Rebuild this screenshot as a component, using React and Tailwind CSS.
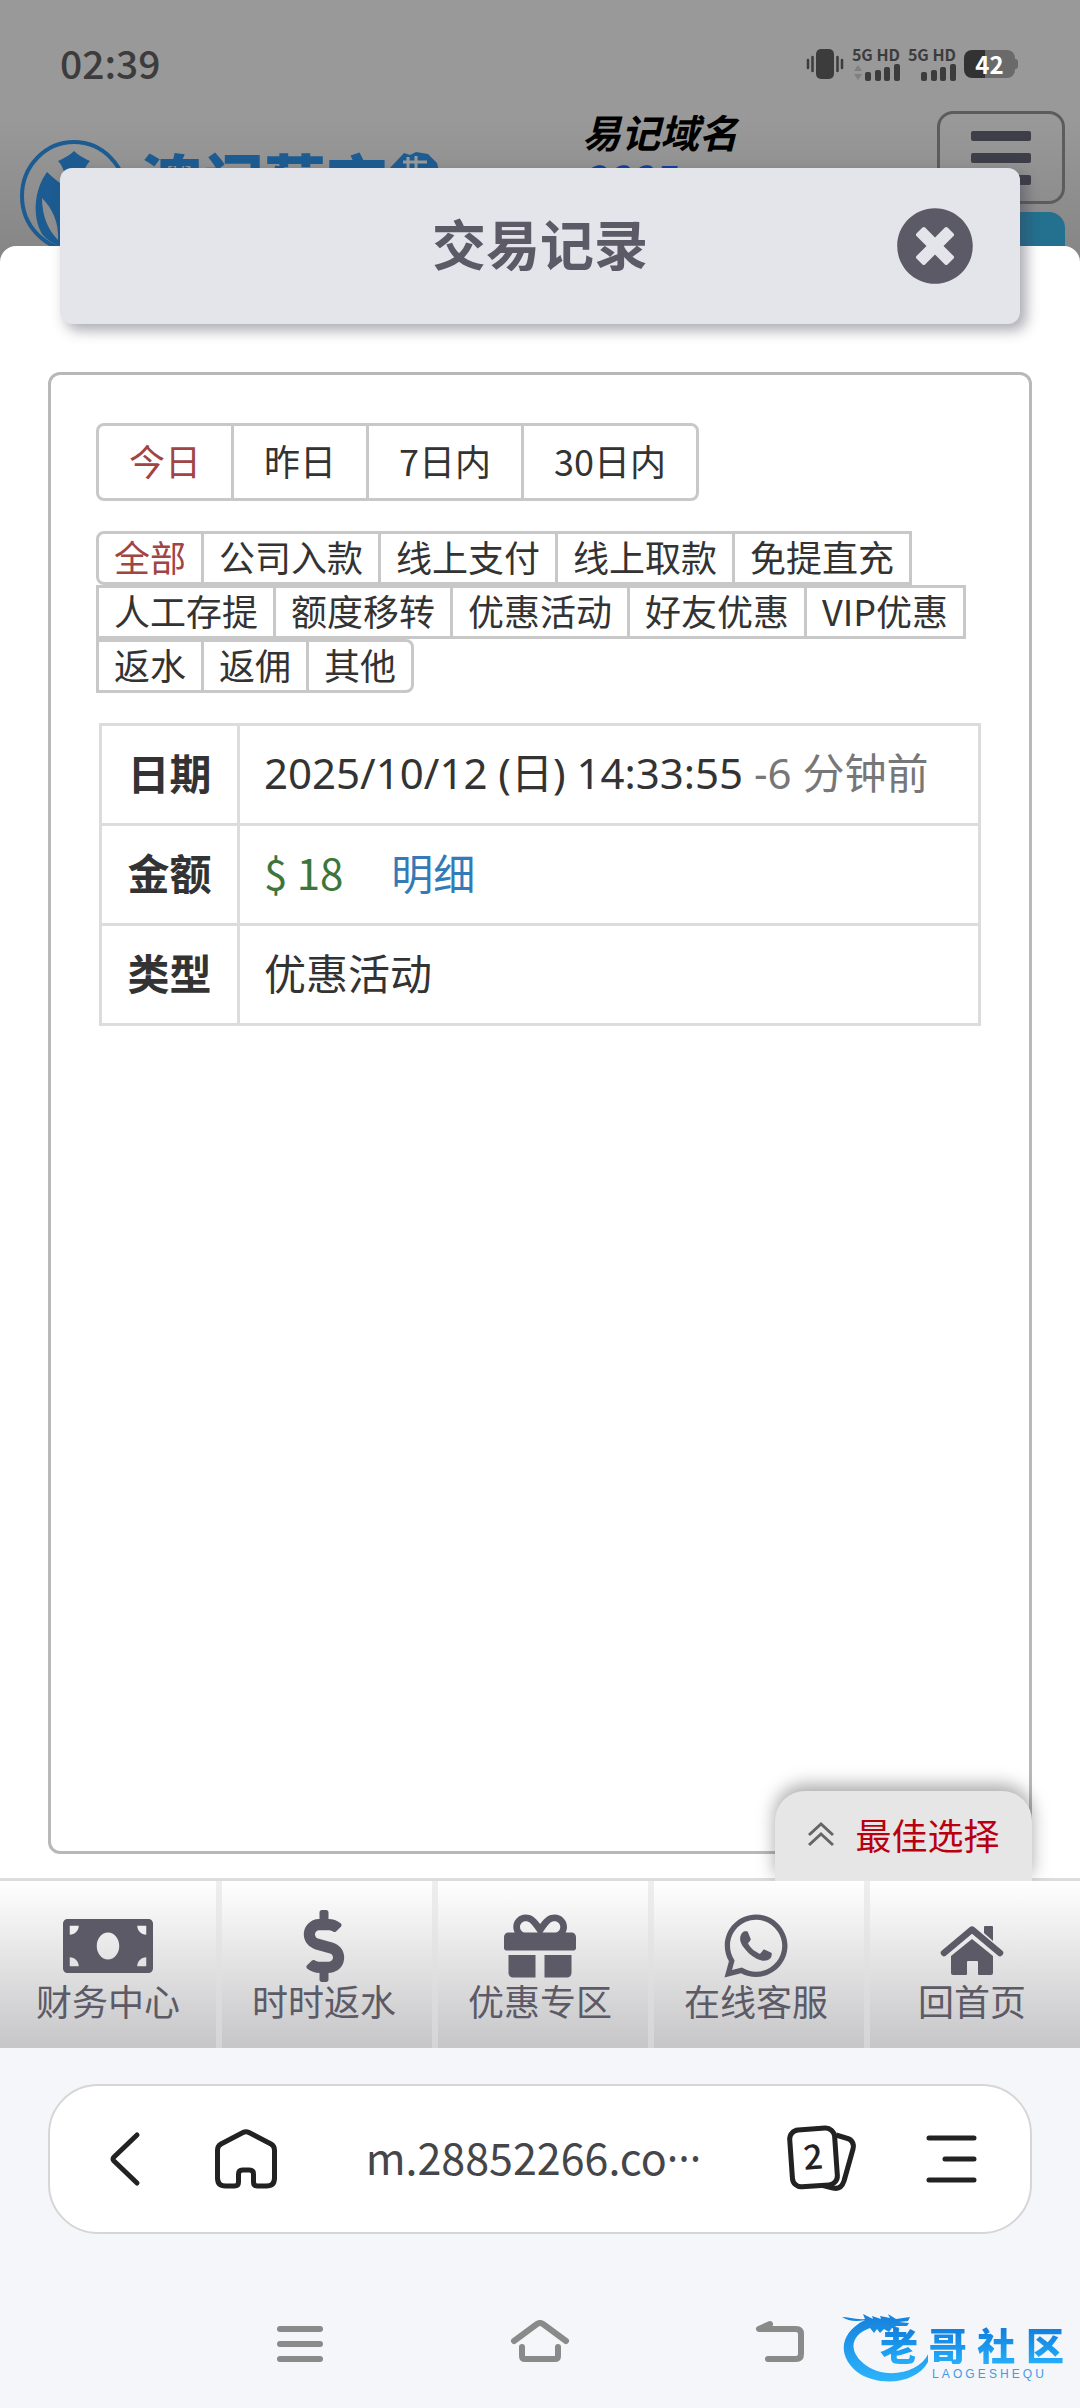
import React, { useState } from 'react';
import { FaMoneyBill, FaDollarSign, FaGift, FaWhatsapp, FaTimesCircle } from 'react-icons/fa';

const days = ['今日', '昨日', '7日内', '30日内'];

const types = [
    '全部',
    '公司入款',
    '线上支付',
    '线上取款',
    '免提直充',
    '人工存提',
    '额度移转',
    '优惠活动',
    '好友优惠',
    'VIP优惠',
    '返水',
    '返佣',
    '其他',
];

const menus = [
    { name: '财务中心', icon: FaMoneyBill, size: 'w-[90px] h-[72px]' },
    { name: '时时返水', icon: FaDollarSign, size: 'w-[72px] h-[72px]' },
    { name: '优惠专区', icon: FaGift, size: 'w-[72px] h-[72px]' },
    { name: '在线客服', icon: FaWhatsapp, size: 'w-[72px] h-[72px]' },
    { name: '回首页', icon: HouseIcon, size: 'w-[72px] h-[72px]' },
];

function HouseIcon({ className }) {
    return (
        <svg className={className} viewBox="0 0 72 72" fill="currentColor" aria-hidden="true">
            <path d="M49 16h7a1 1 0 0 1 1 1v14l-9-8v-6a1 1 0 0 1 1-1z" />
            <path d="M8 43 36 19.500 64 43" fill="none" stroke="currentColor" strokeWidth="6.500" strokeLinecap="round" strokeLinejoin="round" />
            <path d="M36 29 57 46v17a2 2 0 0 1-2 2H43a1 1 0 0 1-1-1V52a1 1 0 0 0-1-1h-9a1 1 0 0 0-1 1v12a1 1 0 0 1-1 1H17a2 2 0 0 1-2-2V46z" />
        </svg>
    );
}

function Signal({ arrows }) {
    return (
        <div className="flex w-12 flex-col items-end">
            <span className="text-base leading-4 font-bold whitespace-nowrap">5G HD</span>
            <svg width="48" height="20" viewBox="0 0 48 20" aria-hidden="true">
                {arrows && <path d="M6 3l4 6H2zM6 18l4-6H2z" fill="#808080" />}
                <rect x="13" y="10" width="6" height="9" rx="2" fill="#3c3c3c" />
                <rect x="23" y="8" width="6" height="11" rx="2" fill="#3c3c3c" />
                <rect x="32" y="5" width="6" height="14" rx="2" fill="#3c3c3c" />
                <rect x="42" y="2" width="6" height="17" rx="2" fill="#3c3c3c" />
            </svg>
        </div>
    );
}

function StatusBar() {
    return (
        <div className="flex h-24 items-center justify-between pt-8 pr-[62px] pl-[60px] text-[#3c3c3c]">
            <span className="pb-1 text-[39px] leading-10 font-medium">02:39</span>
            <div className="flex items-center gap-2">
                <svg width="38" height="32" viewBox="0 0 38 32" aria-hidden="true">
                    <rect x="10" y="1" width="18" height="30" rx="5" fill="#3c3c3c" />
                    <path d="M2 12v8M6.500 9v14M31.500 9v14M36 12v8" stroke="#3c3c3c" strokeWidth="2.500" strokeLinecap="round" />
                </svg>
                <Signal arrows />
                <Signal />
                <div className="flex items-center">
                    <div className="flex h-7 w-[51px] items-center justify-center rounded-lg bg-linear-to-r from-[#323232] from-42% to-[#6a6a6a] to-42% text-2xl leading-7 font-bold text-white">
                        42
                    </div>
                    <div className="h-2.5 w-[3px] rounded-r bg-[#6a6a6a]"></div>
                </div>
            </div>
        </div>
    );
}

function SiteHeader() {
    return (
        <div className="flex items-start justify-between pr-[15px] pl-5">
            <div className="flex items-start pt-11">
                <svg width="108" height="112" viewBox="0 0 108 112" className="shrink-0" aria-hidden="true">
                    <ellipse cx="54" cy="56" rx="52" ry="54" fill="none" stroke="#1c5c92" strokeWidth="4" />
                    <path d="M54 11c5 5 10 7 16 10-4 4-6 9-7 16H45c-1-7-3-12-7-16 6-3 11-5 16-10z" fill="#1c5c92" />
                    <path d="M27 32C14 50 12 76 22 94c8 10 20 14 32 14s24-4 32-14c10-18 8-44-5-62-10 12-22 16-27 26-5-10-17-16-27-26z" fill="#1c5c92" />
                    <path d="M22 58c10 10 17 24 16 42-10-10-16-24-16-42z" fill="#8f8f8f" />
                </svg>
                <div className="flex items-start pt-2 pl-3 text-[#1c5c92]">
                    <span className="text-[62px] leading-[64px] font-black">澳门葡京</span>
                    <svg width="52" height="56" viewBox="0 0 52 56" aria-hidden="true">
                        <path d="M16 5l6 2 6-3 12 2 9 9 2 8v20L38 56H14L2 43V20z" fill="#1c5c92" />
                        <path d="M20 9v12M15 14h24M28 8v18M12 22h28" stroke="#9a9a9a" strokeWidth="3" />
                    </svg>
                </div>
            </div>
            <div className="ml-auto flex w-[355px] flex-col pt-3 text-[39px] leading-[46px] font-bold text-black italic">
                <span>易记域名</span>
                <span className="text-[#0f3f9c]">2885</span>
            </div>
            <div className="flex flex-col items-end gap-2 pt-[15px]">
                <button
                    type="button"
                    aria-label="菜单"
                    className="flex h-[93px] w-32 flex-col items-center justify-center gap-3 rounded-2xl border-3 border-[#5c5c5c]"
                >
                    <span className="h-2.5 w-[60px] rounded-xs bg-[#3e3e48]"></span>
                    <span className="h-2.5 w-[60px] rounded-xs bg-[#3e3e48]"></span>
                    <span className="h-2.5 w-[60px] rounded-xs bg-[#3e3e48]"></span>
                </button>
                <div className="h-14 w-32 rounded-2xl bg-[#23708f]"></div>
            </div>
        </div>
    );
}

function RecordTable() {
    return (
        <table className="mx-[3px] mt-[30px] w-[882px] max-w-full border-collapse text-left text-[42px] leading-[48px] text-[#333]">
            <tbody>
                <tr className="h-[100px]">
                    <th className="w-[138px] border-3 border-[#dcdcdc] pb-1.5 text-center font-bold">日期</th>
                    <td className="border-3 border-[#dcdcdc] px-6 pb-1 font-['Noto_Sans','Noto_Sans_CJK_SC',sans-serif] whitespace-nowrap">
                        2025/10/12 (日) 14:33:55 <span className="text-[#777]">-6 分钟前</span>
                    </td>
                </tr>
                <tr className="h-[100px]">
                    <th className="border-3 border-[#dcdcdc] pb-1.5 text-center font-bold">金额</th>
                    <td className="border-3 border-[#dcdcdc] px-6 pb-1.5">
                        <span className="text-[#3c763d]">$ 18</span>
                        <a href="#detail" className="ml-12 text-[#337ab7]">
                            明细
                        </a>
                    </td>
                </tr>
                <tr className="h-[100px]">
                    <th className="border-3 border-[#dcdcdc] pb-1.5 text-center font-bold">类型</th>
                    <td className="border-3 border-[#dcdcdc] px-6 pb-1.5">优惠活动</td>
                </tr>
            </tbody>
        </table>
    );
}

function BottomMenu() {
    return (
        <nav className="relative border-t-3 border-[#dcdcdc]">
            <button
                type="button"
                className="absolute right-12 bottom-full flex h-[90px] w-[257px] items-center justify-center gap-5 rounded-t-[30px] bg-[#e6e6e6] pb-1 text-4xl text-[#b80010] shadow-[0_-6px_18px_rgba(0,0,0,0.35)]"
            >
                <svg width="28" height="26" viewBox="0 0 28 26" fill="none" stroke="#666" strokeWidth="3" aria-hidden="true">
                    <path d="M2 14 14 3l12 11M2 24l12-11 12 11" />
                </svg>
                最佳选择
            </button>
            <div className="relative grid grid-cols-5 bg-linear-to-b from-white to-[#c6c6c8]">
                {menus.map((item, i) => {
                    const Icon = item.icon;
                    return (
                        <a
                            key={item.name}
                            href="#menu"
                            className={
                                'flex flex-col items-center pt-[29px] pb-[30px] text-4xl leading-9 text-[#5c5a66]' +
                                (i > 0 ? ' shadow-[inset_6px_0_rgba(224,224,226,0.55)]' : '')
                            }
                        >
                            <Icon className={item.size} />
                            {item.name}
                        </a>
                    );
                })}
            </div>
        </nav>
    );
}

function BrowserBar() {
    return (
        <div className="mx-12 mt-9 flex h-[150px] items-center rounded-[50px] border-2 border-[#d6d6d6] bg-white pr-[51px] pl-[58px] text-[#222]">
            <button type="button" aria-label="后退">
                <svg width="34" height="60" viewBox="0 0 34 60" fill="none" stroke="currentColor" strokeWidth="5" strokeLinecap="round" strokeLinejoin="round">
                    <path d="M29 6 6 28q-2 2 0 4l23 22" />
                </svg>
            </button>
            <button type="button" aria-label="主页" className="ml-[72px]">
                <svg width="64" height="64" viewBox="0 0 64 64" fill="none" stroke="currentColor" strokeWidth="5" strokeLinejoin="round">
                    <path d="M29 5.500q3-1.500 6 0L57 17q3.500 2 3.500 6v28q0 8-8 8h-9q-4 0-4-4V47q0-4-4-4h-7q-4 0-4 4v8q0 4-4 4h-9q-8 0-8-8V23q0-4 3.500-6z" />
                </svg>
            </button>
            <button type="button" className="flex-1 pb-1 pl-1 text-center text-[43px] leading-[50px] text-[#45464a]">
                m.28852266.co<span className="font-['Noto_Sans',sans-serif]">···</span>
            </button>
            <button type="button" aria-label="标签页" className="relative">
                <svg width="72" height="72" viewBox="0 0 72 72" fill="none" stroke="currentColor" strokeWidth="5" strokeLinejoin="round">
                    <path d="M51 12l10 3q9 2 7 11L59 58q-3 9-11 7L24 59" />
                    <rect x="6" y="6" width="45" height="57" rx="9" fill="#fff" transform="rotate(-4 28 34)" />
                    <text x="28" y="46" fontSize="34" fontWeight="500" fill="currentColor" stroke="none" textAnchor="middle" transform="rotate(-4 28 34)">
                        2
                    </text>
                </svg>
            </button>
            <button type="button" aria-label="更多" className="ml-[68px]">
                <svg width="54" height="54" viewBox="0 0 54 54" stroke="currentColor" strokeWidth="5" strokeLinecap="round">
                    <path d="M4 6h45M20 27h29M4 48h45" />
                </svg>
            </button>
        </div>
    );
}

function Watermark() {
    return (
        <div className="absolute right-4 bottom-6 flex h-[72px] w-[224px] flex-col items-end pt-3">
            <svg className="absolute top-0 left-0" width="92" height="72" viewBox="0 0 92 72" aria-hidden="true">
                <defs>
                    <linearGradient id="dragon" x1="0" y1="0" x2="0" y2="1">
                        <stop offset="0" stopColor="#1580dc" />
                        <stop offset="1" stopColor="#2cb4fb" />
                    </linearGradient>
                </defs>
                <path
                    d="M25 8C-3 22-2 47 20 62c22 13 57 9 68-12v-8C80 60 48 68 27 54 9 42 8 24 30 16l4 5 3-4 3 4 4-4 5 3 3-4 8 2-5-4h12l2-3-10-1 9-1 2-4-14 2-8-5 2 4-10-2 1 3-9-3 1 3-10-5 2 5C16 8 8 5 2 5c6 4 14 5 23 3z"
                    fill="url(#dragon)"
                />
            </svg>
            <div className="relative flex w-[184px] justify-between bg-linear-to-b from-[#1179db] to-[#25aefa] bg-clip-text text-[38px] leading-10 font-black text-transparent">
                <span>老</span>
                <span>哥</span>
                <span>社</span>
                <span>区</span>
            </div>
            <div className="relative mt-1 mr-5 flex w-[112px] justify-between font-['Liberation_Sans',sans-serif] text-xs leading-3 text-[#3f9be6]">
                {['L', 'A', 'O', 'G', 'E', 'S', 'H', 'E', 'Q', 'U'].map((c, i) => (
                    <span key={i}>{c}</span>
                ))}
            </div>
        </div>
    );
}

function SystemNav() {
    return (
        <div className="relative flex h-[174px] items-center justify-center gap-[180px] pt-[46px] text-[#8a8a8a]">
            <button type="button" aria-label="最近任务">
                <svg width="60" height="48" viewBox="0 0 60 48" stroke="currentColor" strokeWidth="6" strokeLinecap="round">
                    <path d="M10 9h40M10 24h40M10 39h40" />
                </svg>
            </button>
            <button type="button" aria-label="桌面">
                <svg width="60" height="48" viewBox="0 0 60 48" fill="none" stroke="currentColor" strokeWidth="6" strokeLinecap="round" strokeLinejoin="round">
                    <path d="M4 21 27 4q3-2 6 0l23 17" />
                    <path d="M12 27v9q0 3 3 3h30q3 0 3-3v-9" />
                </svg>
            </button>
            <button type="button" aria-label="返回">
                <svg width="60" height="48" viewBox="0 0 60 48" fill="none" stroke="currentColor" strokeWidth="6" strokeLinecap="round" strokeLinejoin="round">
                    <path d="M20 4 9 9h37q5 0 5 5v20q0 5-5 5H18" />
                </svg>
            </button>
            <Watermark />
        </div>
    );
}

export default function App() {
    const [day, setDay] = useState('今日');
    const [type, setType] = useState('全部');

    return (
        <div className="flex min-h-screen flex-col bg-white font-['Noto_Sans_CJK_SC',sans-serif] text-[#333]">
            <header className="h-[262px] overflow-hidden bg-linear-to-b from-[#999] from-45% to-[#858585]">
                <StatusBar />
                <SiteHeader />
            </header>

            <main className="relative -mt-4 flex flex-1 flex-col rounded-t-2xl bg-white">
                <div className="mx-[60px] -mt-[78px] flex h-[156px] items-center rounded-xl bg-[#e3e5ea] pr-[46px] pl-[124px] text-[#5c5a66] shadow-[6px_6px_14px_rgba(60,60,80,0.45)]">
                    <h1 className="flex-1 pb-1.5 text-center text-[54px] leading-[60px] font-bold">交易记录</h1>
                    <button type="button" aria-label="关闭">
                        <FaTimesCircle className="size-[78px]" />
                    </button>
                </div>

                <section className="mx-12 mt-12 mb-6 flex-1 rounded-xl border-3 border-[#b8b8b8] px-[45px] pt-12">
                    <div className="flex flex-wrap pl-[3px] text-4xl">
                        {days.map((d) => (
                            <button
                                key={d}
                                type="button"
                                onClick={() => setDay(d)}
                                className={
                                    '-ml-[3px] h-[78px] border-3 border-[#c8c8c8] px-[30px] pb-1 first:rounded-l-lg last:rounded-r-lg ' +
                                    (d === day ? 'text-[#a04444]' : '')
                                }
                            >
                                {d}
                            </button>
                        ))}
                    </div>
                    <div className="mt-[30px] flex flex-wrap pl-[3px] text-4xl">
                        {types.map((t) => (
                            <button
                                key={t}
                                type="button"
                                onClick={() => setType(t)}
                                className={
                                    '-ml-[3px] h-[54px] border-3 border-[#c8c8c8] px-[15px] pb-1 leading-[44px] first:rounded-l-lg last:rounded-r-lg ' +
                                    (t === type ? 'text-[#a04444]' : '')
                                }
                            >
                                {t}
                            </button>
                        ))}
                    </div>
                    <RecordTable />
                </section>
            </main>

            <BottomMenu />

            <footer className="bg-[#f5f6f9]">
                <BrowserBar />
                <SystemNav />
            </footer>
        </div>
    );
}
